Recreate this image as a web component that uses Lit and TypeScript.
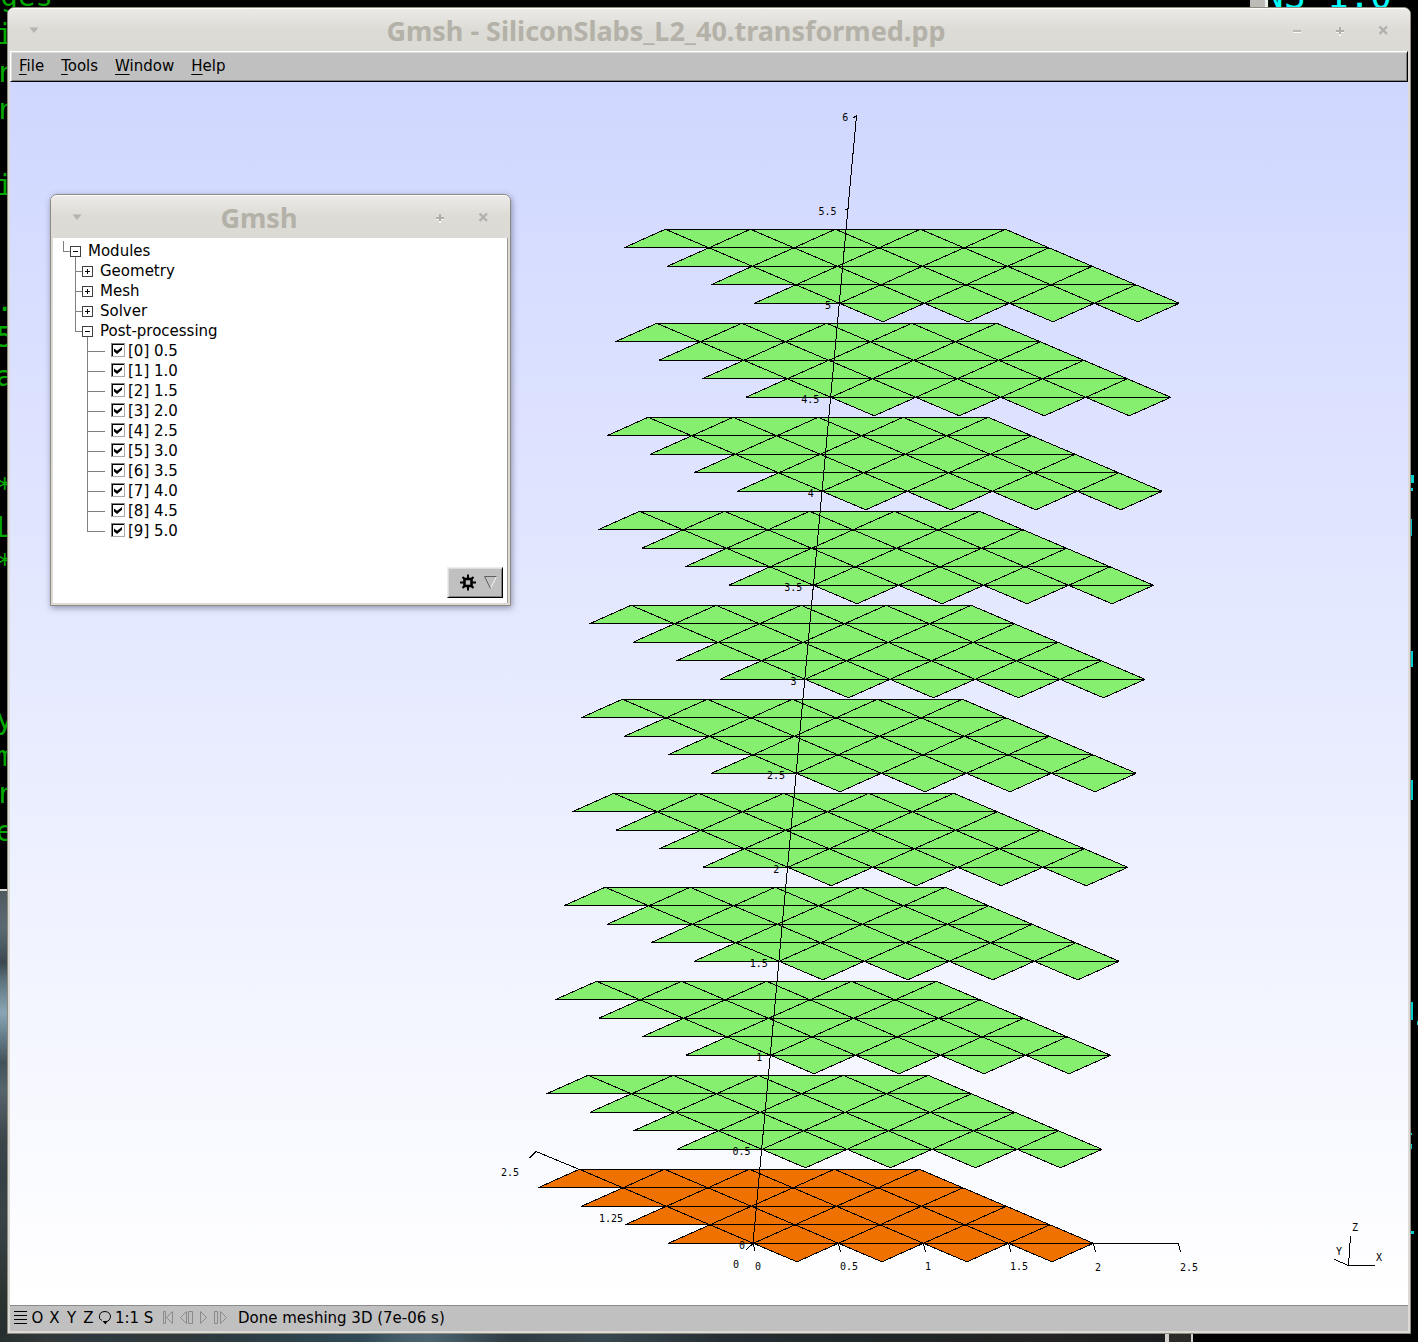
import { LitElement, html, svg, css } from "lit";
import { customElement, property, state } from "lit/decorators.js";

/* ---------- window title bar ---------- */

@customElement("title-bar")
class TitleBar extends LitElement {
  @property() heading = "";
  @property({ type: Boolean }) minimizable = false;

  static styles = css`
    :host {
      display: block;
    }
    .bar {
      display: flex;
      align-items: stretch;
      height: 43px;
      padding: 0 5px;
      box-sizing: border-box;
      border-top: 1px solid #fdfdfc;
      border-radius: 6px 6px 0 0;
      background: linear-gradient(#ebeae7, #dcdbd5 50%, #dbdad4);
    }
    h1 {
      flex: 1;
      margin: 0;
      padding-top: 3px;
      font: bold 27px/38px "Noto Sans", "Open Sans", sans-serif;
      color: #b3b1a8;
      text-align: center;
      white-space: nowrap;
      overflow: hidden;
    }
    button {
      width: 43px;
      padding: 0;
      border: 0;
      background: none;
    }
    svg {
      display: block;
      margin: 0 auto;
    }
  `;

  render() {
    return html`
      <header class="bar">
        <button aria-label="Window menu">
          <svg width="11" height="11" viewBox="0 0 11 11"><path d="M0.500 2.500H9.500L5 8Z" fill="#b3b3b0" /></svg>
        </button>
        <h1>${this.heading}</h1>
        ${this.minimizable
          ? html`<button aria-label="Minimize">
              <svg width="11" height="11" viewBox="0 0 11 11" shape-rendering="crispEdges">
                <path d="M1 7H9V8H1Z" fill="#fafaf8" /><path d="M1 5H9V7H1Z" fill="#bdbab0" />
              </svg>
            </button>`
          : ""}
        <button aria-label="Maximize">
          <svg width="11" height="11" viewBox="0 0 11 11" shape-rendering="crispEdges">
            <path d="M1 7H9V8H6V11H4V8H1Z" fill="#f6f6f3" />
            <path d="M4 2H6V5H9V7H6V9H4V7H1V5H4Z" fill="#b1afa8" />
          </svg>
        </button>
        <button aria-label="Close">
          <svg width="11" height="11" viewBox="0 0 11 11"><path d="M1.500 1.500L9 9M9 1.500L1.500 9" stroke="#b1b0ae" stroke-width="2.400" /></svg>
        </button>
      </header>
    `;
  }
}

/* ---------- 3D view ---------- */

const ORIGIN = [753.4, 1243.3];
const A = [85, 0];
const B = [-43.5, -18.5];
const LEVEL = [8.6, -94];

const point = (level: number, i: number, j: number) =>
  [
    ORIGIN[0] + level * LEVEL[0] + i * A[0] + j * B[0],
    ORIGIN[1] + level * LEVEL[1] + i * A[1] + j * B[1],
  ].join(" ");

const slabFill = (k: number) => {
  let d = "";
  for (let j = 0; j < 4; j++)
    d += `M${point(k, -1, j)}L${point(k, 0, j + 1)}L${point(k, 4, j + 1)}L${point(k, 4, j)}Z`;
  for (let i = 0; i < 4; i++) d += `M${point(k, i, 0)}L${point(k, i + 1, 0)}L${point(k, i, -1)}Z`;
  return d;
};

const slabEdges = (k: number) => {
  let d = "";
  for (let j = 0; j < 4; j++) d += `M${point(k, -1, j)}L${point(k, 4, j)}`;
  d += `M${point(k, 0, 4)}L${point(k, 4, 4)}`;
  for (let i = 0; i < 5; i++) d += `M${point(k, i, i < 4 ? -1 : 0)}L${point(k, i, 4)}`;
  for (let j = 0; j < 4; j++) d += `M${point(k, -1, j)}L${point(k, 3 - j, 4)}`;
  d += `M${point(k, 0, 0)}L${point(k, 4, 4)}`;
  for (let i = 0; i < 4; i++) d += `M${point(k, i, -1)}L${point(k, 4, 3 - i)}`;
  return d;
};

@customElement("mesh-view")
class MeshView extends LitElement {
  static styles = css`
    :host {
      display: block;
      min-height: 0;
      background: linear-gradient(#cfd7ff, #ffffff);
    }
    svg {
      display: block;
      width: 100%;
      height: 100%;
    }
    .line {
      fill: none;
      stroke: #000;
      stroke-width: 1px;
      shape-rendering: crispEdges;
    }
    .green {
      fill: #86ef70;
    }
    .orange {
      fill: #ef7200;
    }
    text {
      font: 10px "DejaVu Sans Mono", monospace;
      fill: #000;
    }
  `;

  render() {
    const levels = Array.from({ length: 11 }, (_, k) => k);
    const zLabels = Array.from({ length: 13 }, (_, k) => {
      const value = String(k / 2);
      const right = 745 + k * 8.6 + (value.length > 1 ? -3 : 0);
      return svg`<text x=${right} y=${1249 - k * 94} text-anchor="end">${value}</text>`;
    });
    const xLabels = [
      ["0", 755, 1270],
      ["0.5", 840, 1270],
      ["1", 925, 1270],
      ["1.5", 1010, 1270],
      ["2", 1095, 1271],
      ["2.5", 1180, 1271],
      ["0", 733, 1268],
      ["1.25", 599, 1222],
      ["2.5", 501, 1176],
      ["Z", 1352, 1231],
      ["Y", 1336, 1255],
      ["X", 1376, 1261],
    ];
    return html`
      <svg viewBox="10 82 1398 1223" role="img" aria-label="Stacked silicon slab meshes">
        ${levels.map(
          (k) => svg`
            <path class=${k === 0 ? "orange" : "green"} d=${slabFill(k)} />
            <path class="line" d=${slabEdges(k)} />`
        )}
        <path
          class="line"
          d="M753 1243.500L856.500 115.500L853 118M848.500 208L845 210M1093 1243.500H1178.500L1180.500 1252
             M753 1243.500L755 1251M838.500 1243.500L840.500 1252M923.500 1243.500L925.500 1252M1008.500 1243.500L1011 1252
             M1093.500 1243.500L1095.500 1252M753 1243.500L746 1250M579.500 1169.500L536 1151.500L529.500 1158"
        />
        <path class="line" d="M1350.500 1236L1348.500 1265.500H1374.500M1348.500 1265.500L1334.500 1259.500" />
        ${zLabels}
        ${xLabels.map(([t, x, y]) => svg`<text x=${x} y=${y}>${t}</text>`)}
      </svg>
    `;
  }
}

/* ---------- module tree ---------- */

type Row = { label: string; kind: "root" | "branch" | "last" | "leaf" | "end"; open?: boolean };

const ROWS: Row[] = [
  { label: "Modules", kind: "root", open: true },
  { label: "Geometry", kind: "branch" },
  { label: "Mesh", kind: "branch" },
  { label: "Solver", kind: "branch" },
  { label: "Post-processing", kind: "last", open: true },
  ...Array.from({ length: 10 }, (_, i): Row => ({
    label: `[${i}] ${((i + 1) / 2).toFixed(1)}`,
    kind: i < 9 ? "leaf" : "end",
  })),
];

const GUIDES = {
  root: "M10.500 0V10.500H17M22.500 16V20",
  branch: "M22.500 0V20M23 10.500H29",
  last: "M22.500 0V10.500H29M34.500 16V20",
  leaf: "M34.500 0V20M35 10.500H52",
  end: "M34.500 0V10.500H52",
};

@customElement("module-tree")
class ModuleTree extends LitElement {
  static styles = css`
    :host {
      display: block;
      flex: 1;
    }
    ul {
      list-style: none;
      margin: 0;
      padding: 3px 0 0;
    }
    li {
      display: flex;
      height: 20px;
      font: 15px/20px "DejaVu Sans", sans-serif;
      color: #000;
    }
    button {
      display: flex;
      padding: 0;
      border: 0;
      background: none;
      font: inherit;
      color: inherit;
    }
    label {
      display: flex;
      gap: 3px;
    }
    input {
      appearance: none;
      width: 14px;
      height: 14px;
      margin: 2px 0 0;
      border: 1px solid;
      border-color: #808080 #aaaaaa #aaaaaa #808080;
      box-shadow: inset 1px 1px #000;
      background: #fff;
    }
    input:checked::before {
      content: "";
      display: block;
      width: 8px;
      height: 7px;
      margin: 3px 0 0 2px;
      background: #000;
      clip-path: polygon(0 20%, 38% 55%, 100% 0, 100% 40%, 38% 100%, 0 65%);
    }
    .guide {
      stroke: #808080;
      fill: none;
    }
    .box {
      stroke: #404040;
      fill: #fff;
    }
    .sign {
      stroke: #000;
    }
  `;

  render() {
    return html`
      <ul>
        ${ROWS.map((row, n) => {
          const leaf = row.kind === "leaf" || row.kind === "end";
          const width = row.kind === "root" ? 35 : leaf ? 58 : 47;
          const c = row.kind === "root" ? 22 : 34;
          const guide = svg`
            <path class="guide" d=${GUIDES[row.kind]} />
            ${leaf
              ? ""
              : svg`<rect class="box" x=${c - 4.5} y="5.500" width="10" height="10" />
                <path class="sign" d=${`M${c - 2} 10.500H${c + 3}` + (row.open ? "" : `M${c + 0.5} 8V13`)} />`}`;
          const picture = html`<svg width=${width} height="20" shape-rendering="crispEdges">${guide}</svg>`;
          return leaf
            ? html`<li>${picture}<label for="view${n}"><input type="checkbox" id="view${n}" checked />${row.label}</label></li>`
            : html`<li><button aria-expanded=${row.open ? "true" : "false"}>${picture}${row.label}</button></li>`;
        })}
      </ul>
    `;
  }
}

/* ---------- status bar ---------- */

@customElement("status-bar")
class StatusBar extends LitElement {
  static styles = css`
    :host {
      display: block;
    }
    footer {
      display: flex;
      height: 26px;
      padding: 0 2px 1px;
      box-sizing: border-box;
      border-top: 1px solid #8c8c8c;
      background: #c0c0c0;
      font: 15px/24px "DejaVu Sans", sans-serif;
      color: #000;
    }
    button {
      width: 17px;
      padding: 0;
      border: 0;
      background: none;
      font: inherit;
      color: inherit;
    }
    .wide {
      width: 26px;
      white-space: nowrap;
    }
    .player {
      display: flex;
      padding: 0 11px 0 2px;
    }
    svg {
      display: block;
      margin-bottom: 1px;
      fill: none;
      stroke: #000;
    }
    .player svg {
      stroke: #8a8a8a;
    }
    output {
      white-space: nowrap;
    }
  `;

  render() {
    const icon = (name: string, d: string) =>
      html`<button aria-label=${name}><svg width="17" height="17" viewBox="0 0 17 17"><path d=${d} /></svg></button>`;
    return html`
      <footer>
        ${icon("Toggle message console", "M2 2.500H15M2 6.500H15M2 10.500H15M2 14.500H15")}
        <button>O</button><button>X</button><button>Y</button><button>Z</button>
        <button aria-label="Rotate">
          <svg width="17" height="17" viewBox="0 0 17 17">
            <path d="M5 11.500L2.500 9.500Q1.500 2.500 8 2.500Q13.500 3 13.500 8Q13 11.500 10 12.500" />
            <path d="M5.500 12H10.500L8.500 15.500Z" fill="#000" stroke="none" />
          </svg>
        </button>
        <button class="wide">1:1</button><button>S</button>
        <div class="player">
          ${icon("Rewind", "M4.500 2.500H6.500V14.500H4.500ZM13.500 2.500L7.500 8.500L13.500 14.500Z")}
          ${icon("Step back", "M10.500 2.500V14.500L4.500 8.500ZM12.500 2.500H16.500V14.500H12.500Z")}
          ${icon("Play", "M7.500 2.500L13.500 8.500L7.500 14.500Z")}
          ${icon("Step forward", "M4.500 2.500H7.500V14.500H4.500ZM10.500 2.500L16.500 8.500L10.500 14.500Z")}
        </div>
        <output>Done meshing 3D (7e-06 s)</output>
      </footer>
    `;
  }
}

/* ---------- desktop ---------- */

const LEFT_GLYPHS: [string, number][] = [
  ["i", 44], ["r", 82], ["r", 119], ["i", 195], [".", 311], ["5", 347], ["a", 386],
  ["*", 498], ["L", 537], ["*", 574], ["y", 729], ["m", 766], ["r", 803], ["e", 841],
];

const RIGHT_MARKS = [
  [0, 475, 3, 8], [0, 488, 2, 3], [0, 519, 1, 17], [0, 651, 2, 16], [0, 780, 2, 20],
  [0, 1002, 2, 18], [6, 1021, 1, 4], [0, 1133, 1, 2], [0, 1144, 1, 5], [0, 1231, 3, 3],
];

@customElement("app-root")
class AppRoot extends LitElement {
  @state() private menus = ["File", "Tools", "Window", "Help"];

  static styles = css`
    :host {
      display: block;
    }
    .desktop {
      position: relative;
      display: flex;
      height: 100vh;
      min-height: 700px;
      padding: 7px 7px 8px;
      box-sizing: border-box;
      background: #000;
      overflow: hidden;
    }
    .terminal {
      position: absolute;
      top: 0;
      height: 100%;
      font: 29px "DejaVu Sans Mono", monospace;
    }
    .left {
      left: 0;
      width: 80px;
      fill: #00a800;
    }
    .right {
      right: 0;
      width: 168px;
      fill: #00cdcd;
    }
    .banner {
      font-size: 36px;
      fill: #00ffff;
    }
    .wall-left {
      position: absolute;
      left: 0;
      top: 889px;
      bottom: 0;
      width: 7px;
      border-top: 2px solid #dcdad5;
      background: linear-gradient(#4e5a60, #5c6a72 8%, #3c4a50 16%, #5f7681 20%, #8aa5b4 27%, #6d8795 31%, #44535a 38%, #56646c 44%, #3c464b 55%, #353f45 64%, #3a4448 72%, #2c3430 90%, #242c30);
    }
    .wall-bottom {
      position: absolute;
      left: 0;
      bottom: 0;
      height: 8px;
      width: 1165px;
      background: linear-gradient(90deg, #27302f, #33383a 4%, #2d3a40 9%, #30383a 14%, #2c3b42 20%, #2f4a56 31%, #47606c 35%, #4b6470 37%, #2f3b42 44%, #384850 52%, #252e33 62%, #20282b 72%, #202323 84%, #242222 90%, #1b1d1e);
    }
    .splitter {
      position: absolute;
      left: 1165px;
      bottom: 0;
      width: 28px;
      height: 8px;
      box-sizing: border-box;
      border: 0 solid #d0cec9;
      border-width: 0 2px 0 4px;
      background: #2c2a28;
    }
    .window {
      position: relative;
      display: flex;
      flex-direction: column;
      box-sizing: border-box;
      border: 1px solid #8e8a80;
      border-radius: 7px 7px 0 0;
      background: #dcdad5;
    }
    .main {
      flex: 1;
      min-width: 0;
    }
    .content {
      flex: 1;
      display: flex;
      flex-direction: column;
      min-height: 0;
      padding: 0 2px 2px;
    }
    nav {
      display: flex;
      gap: 17px;
      height: 31px;
      padding: 0 8px;
      box-sizing: border-box;
      border: 1px solid;
      border-color: #ffffff #000 #000 #ffffff;
      box-shadow: inset 1px 1px #dcdcdc, inset -1px -1px #808080;
      background: #c0c0c0;
    }
    nav button {
      padding: 0;
      border: 0;
      background: none;
      font: 15px/27px "DejaVu Sans", sans-serif;
      color: #000;
    }
    nav span {
      text-decoration: underline 1px;
      text-underline-offset: 3px;
    }
    mesh-view {
      flex: 1;
    }
    .modules {
      position: absolute;
      left: 42px;
      top: 186px;
      width: 461px;
      height: 412px;
      box-shadow: 1px 2px 6px rgba(60, 60, 90, 0.5);
    }
    .panel {
      flex: 1;
      display: flex;
      flex-direction: column;
      margin: 0 2px 2px;
      border-right: 1px solid #9a9892;
      background: #fff;
    }
    .options {
      align-self: flex-end;
      display: flex;
      align-items: center;
      width: 56px;
      height: 31px;
      margin: 0 4px 5px;
      padding: 0 5px 0 12px;
      box-sizing: border-box;
      border: 1px solid;
      border-color: #ececec #000 #000 #ececec;
      box-shadow: inset 1px 1px #dcdcdc, inset -1px -1px #808080;
      background: #c0c0c0;
    }
    .options svg {
      flex: none;
    }
  `;

  render() {
    return html`
      <div class="desktop">
        <svg class="terminal left" aria-hidden="true">
          <text x="-17" y="6">dges</text>
          ${LEFT_GLYPHS.map(([g, y]) => svg`<text x="-4" y=${y}>${g}</text>`)}
        </svg>
        <svg class="terminal right" aria-hidden="true">
          <text class="banner" x="12" y="8">NS 1.0</text>
          <rect x="0" y="0" width="16" height="8" fill="#bdbbb6" />
          <rect x="15" y="0" width="3" height="8" fill="#eeeeec" />
          ${RIGHT_MARKS.map(([x, y, w, h]) => svg`<rect x=${x + 161} y=${y} width=${w} height=${h} />`)}
        </svg>
        <div class="wall-left"></div>
        <div class="wall-bottom"></div>
        <div class="splitter"></div>

        <main class="window main">
          <title-bar heading="Gmsh - SiliconSlabs_L2_40.transformed.pp" minimizable></title-bar>
          <div class="content">
            <nav>${this.menus.map((m) => html`<button><span>${m[0]}</span>${m.slice(1)}</button>`)}</nav>
            <mesh-view></mesh-view>
            <status-bar></status-bar>
          </div>
          <section class="window modules">
            <title-bar heading="Gmsh"></title-bar>
            <div class="panel">
              <module-tree></module-tree>
              <button class="options" aria-label="Options">
                <svg width="38" height="17" viewBox="0 0 38 17" fill="none">
                  <path d="M8 0.500V4M8 13V16.500M0 8.500H4M12 8.500H16M2.500 3L5 5.500M13.500 3L11 5.500M2.500 14L5 11.500M13.500 14L11 11.500" stroke="#000" stroke-width="2" />
                  <rect x="4.500" y="5" width="7" height="7" stroke="#000" stroke-width="2.600" />
                  <path d="M36.500 2.500L30.500 14.500" stroke="#f4f4f4" />
                  <path d="M36.500 2.500H24.500L30.500 14.500" stroke="#606060" />
                </svg>
              </button>
            </div>
          </section>
        </main>
      </div>
    `;
  }
}
